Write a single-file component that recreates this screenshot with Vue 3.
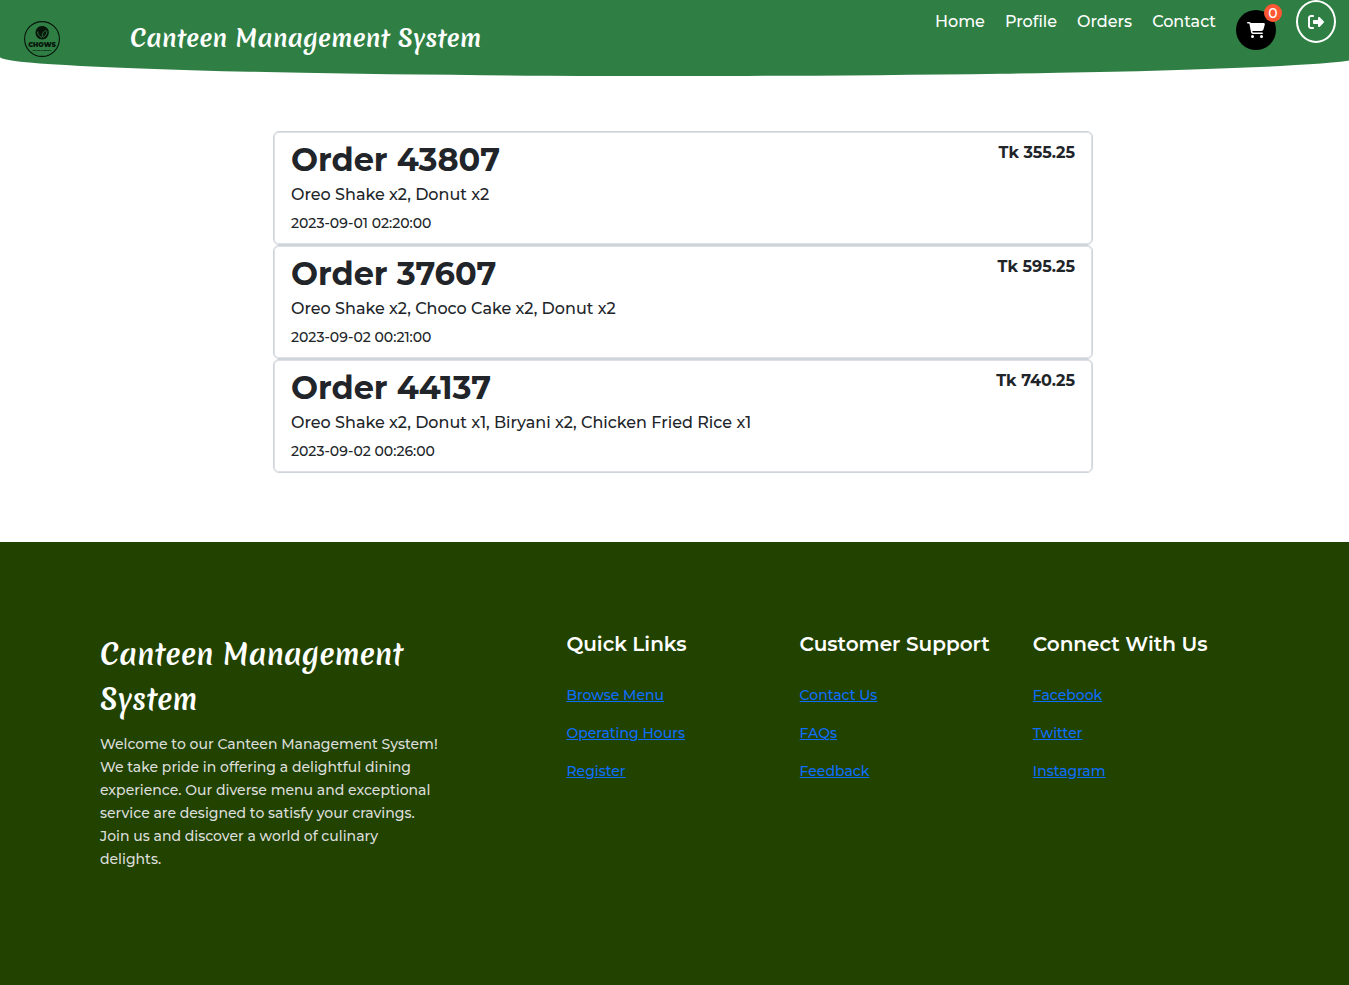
<script setup>
const navLinks = ['Home', 'Profile', 'Orders', 'Contact']

const orders = [
  { id: 43807, items: 'Oreo Shake x2, Donut x2', date: '2023-09-01 02:20:00', total: '355.25' },
  { id: 37607, items: 'Oreo Shake x2, Choco Cake x2, Donut x2', date: '2023-09-02 00:21:00', total: '595.25' },
  { id: 44137, items: 'Oreo Shake x2, Donut x1, Biryani x2, Chicken Fried Rice x1', date: '2023-09-02 00:26:00', total: '740.25' },
]

const linkGroups = [
  { title: 'Quick Links', links: ['Browse Menu', 'Operating Hours', 'Register'] },
  { title: 'Customer Support', links: ['Contact Us', 'FAQs', 'Feedback'] },
  { title: 'Connect With Us', links: ['Facebook', 'Twitter', 'Instagram'] },
]
</script>

<template>
  <div class="page">
    <header class="header">
      <a class="logo" href="#" aria-label="Chows">
        <svg width="36" height="36" viewBox="0 0 36 36">
          <circle cx="18" cy="18" r="17.4" fill="none" stroke="#07150b" stroke-width="1.1" />
          <path d="M18 5c4 0 6.800 2.600 6.800 6.300 0 3.800-2.600 7.200-6.300 7.200-4.300 0-7-3-7-6.700C11.500 7.800 14.300 5 18 5z" fill="#07150b" />
          <path d="M13.500 11c.4 2.600 1.800 4.500 4 5.600M18.300 15.500c-.3-2.800 1-5.200 3.600-6M22.900 10.500c0 2.600-1.400 4.600-3.600 5.700" fill="none" stroke="#2f7f44" stroke-width=".9" stroke-linecap="round" />
          <text x="18" y="25.500" text-anchor="middle" font-size="6.500" font-weight="900" fill="#07150b">CHOWS</text>
          <text x="18" y="29.500" text-anchor="middle" font-size="2.300" font-weight="800" fill="#07150b">FOOD &amp; DRINK</text>
        </svg>
      </a>
      <h1 class="brand">Canteen Management System</h1>
      <nav class="nav">
        <a v-for="link in navLinks" :key="link" class="nav-link" href="#">{{ link }}</a>
        <button class="cart" type="button" aria-label="Cart">
          <svg width="18" height="16" viewBox="0 0 576 512" fill="#fff">
            <path d="M0 24C0 10.700 10.700 0 24 0H69.500c22 0 41.500 12.800 50.600 32h411c26.300 0 45.500 25 38.600 50.400l-41 152.300c-8.500 31.400-37 53.300-69.500 53.300H170.700l5.400 28.500c2.200 11.300 12.100 19.500 23.600 19.500H488c13.300 0 24 10.700 24 24s-10.700 24-24 24H199.700c-34.600 0-64.300-24.600-70.700-58.500L77.400 54.500c-.7-3.800-4-6.500-7.900-6.500H24C10.700 48 0 37.300 0 24zM128 464a48 48 0 1 1 96 0 48 48 0 1 1-96 0zm336-48a48 48 0 1 1 0 96 48 48 0 1 1 0-96z" />
          </svg>
          <span class="badge">0</span>
        </button>
        <button class="logout" type="button" aria-label="Log out">
          <svg width="16" height="16" viewBox="0 0 512 512" fill="#fff">
            <path d="M377.900 105.900L500.700 228.700c7.200 7.200 11.300 17.100 11.300 27.300s-4.100 20.100-11.300 27.300L377.900 406.100c-6.400 6.400-15 9.900-24 9.900-18.700 0-33.900-15.200-33.900-33.900V320H192c-17.700 0-32-14.300-32-32v-64c0-17.700 14.300-32 32-32h128v-62.100c0-18.700 15.200-33.900 33.900-33.900 9 0 17.600 3.600 24 9.900zM160 96H96c-17.700 0-32 14.300-32 32v256c0 17.700 14.300 32 32 32h64c17.700 0 32 14.300 32 32s-14.300 32-32 32H96c-53 0-96-43-96-96V128c0-53 43-96 96-96h64c17.700 0 32 14.300 32 32s-14.300 32-32 32z" />
          </svg>
        </button>
      </nav>
    </header>

    <main class="orders">
      <article v-for="order in orders" :key="order.id" class="order">
        <div>
          <h2 class="order-title">Order {{ order.id }}</h2>
          <p class="order-items">{{ order.items }}</p>
          <p class="order-date">{{ order.date }}</p>
        </div>
        <strong class="order-total">Tk {{ order.total }}</strong>
      </article>
    </main>

    <footer class="footer">
      <section class="about">
        <h2 class="footer-brand">Canteen Management System</h2>
        <p class="intro">
          Welcome to our Canteen Management System! We take pride in offering a delightful dining
          experience. Our diverse menu and exceptional service are designed to satisfy your cravings.
          Join us and discover a world of culinary delights.
        </p>
      </section>
      <section v-for="group in linkGroups" :key="group.title">
        <h3 class="group-title">{{ group.title }}</h3>
        <ul class="links">
          <li v-for="link in group.links" :key="link"><a href="#">{{ link }}</a></li>
        </ul>
      </section>
    </footer>
  </div>
</template>

<style>
body {
  margin: 0;
  background: #fff;
}
</style>

<style scoped>
.page {
  min-height: 100vh;
  display: flex;
  flex-direction: column;
  overflow-x: hidden;
  color: #212529;
  font-family: Montserrat, Inter, sans-serif;
  font-size: 16px;
  line-height: 24px;
}

h1, h2, h3, p, ul {
  margin: 0;
  padding: 0;
}

.header {
  width: calc(100% + 12px);
  height: 76px;
  box-sizing: border-box;
  padding: 0 25px 0 24px;
  display: flex;
  align-items: flex-start;
  background: #2f7f44;
  border-radius: 0 0 50% 50% / 0 0 25% 25%;
}

.logo {
  width: 106px;
  padding-top: 21px;
}

.logo svg {
  display: block;
}

.brand,
.footer-brand {
  color: #fff;
  font-family: Merienda, Lato, sans-serif;
  font-weight: 700;
}

.brand {
  padding-top: 17px;
  font-size: 24px;
  line-height: 42px;
}

.nav {
  margin-left: auto;
  display: flex;
  align-items: flex-start;
  gap: 20px;
}

.nav-link {
  padding-top: 10px;
  color: #fff;
  font-size: 16px;
  font-weight: 500;
  text-decoration: none;
}

.cart,
.logout {
  width: 40px;
  padding: 0;
  display: flex;
  align-items: center;
  justify-content: center;
  border-radius: 50%;
}

.cart {
  position: relative;
  height: 40px;
  margin-top: 10px;
  border: 0;
  background: #000;
}

.badge {
  position: absolute;
  top: -6px;
  right: -6px;
  width: 18px;
  height: 18px;
  border-radius: 50%;
  background: #ff5733;
  color: #fff;
  font-family: Montserrat, Inter, sans-serif;
  font-size: 14px;
  font-weight: 500;
  line-height: 18px;
}

.logout {
  height: 43px;
  border: 2px solid #fff;
  background: transparent;
}

.orders {
  width: 100%;
  max-width: 820px;
  margin: 55px auto 69px;
  padding-left: 17px;
}

.order {
  display: flex;
  justify-content: space-between;
  padding: 9px 17px;
  border: 1px solid #ced4da;
  border-radius: 6px;
  box-shadow: inset 0 0 0 1px #dde1e5;
}

.order-title {
  font-size: 32px;
  font-weight: 700;
  line-height: 38px;
}

.order-items {
  margin-top: 4px;
  font-size: 16px;
  font-weight: 500;
}

.order-date {
  margin-top: 4px;
  font-size: 14px;
  font-weight: 500;
}

.order-total {
  font-size: 16px;
  font-weight: 700;
}

.footer {
  flex: 1;
  display: grid;
  grid-template-columns: 2fr 1fr 1fr 1fr;
  padding: 90px 83px 100px 100px;
  background: #224200;
}

.about {
  max-width: 340px;
}

.footer-brand {
  font-size: 28px;
  line-height: 45px;
}

.intro {
  margin-top: 11px;
  color: #dcdedb;
  font-size: 14px;
  font-weight: 500;
  line-height: 23px;
}

.group-title {
  color: #fff;
  font-size: 20px;
  font-weight: 600;
  line-height: 24px;
}

.links {
  margin-top: 27px;
  display: grid;
  gap: 14px;
  list-style: none;
}

.links a {
  color: #0d6efd;
  font-size: 14px;
  font-weight: 500;
}
</style>
